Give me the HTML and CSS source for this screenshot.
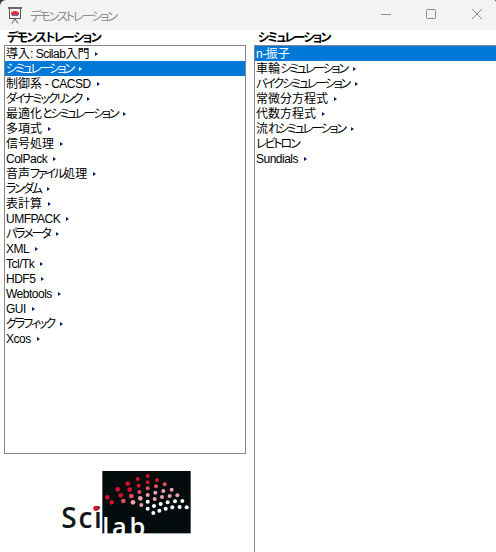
FILE: index.html
```html
<!DOCTYPE html>
<html lang="ja">
<head>
    <meta charset="UTF-8">
    <meta name="viewport" content="width=device-width, initial-scale=1.0">
    <title>デモンストレーション</title>
    <link rel="stylesheet" href="styles.css">
</head>
<body>
    <div class="titlebar">
        <svg class="app-icon" width="14" height="17" viewBox="0 0 14 17">
            <rect x="1.5" y="1.5" width="11" height="10" fill="#f4f1ee" stroke="#5a5a5a"/>
            <rect x="0" y="0" width="14" height="2" fill="#6a6a6a"/>
            <ellipse cx="7" cy="6.5" rx="4" ry="2.6" fill="#d8343f"/>
            <path d="M4 8.5h6" stroke="#4a72b8"/>
            <path d="M4 16.5 L7 12 L10 16.5" fill="none" stroke="#5a5a5a"/>
        </svg>
        <span class="window-title">デモンストレーション</span>
        <div class="window-buttons">
            <svg width="12" height="12" viewBox="0 0 12 12"><path d="M2 6.5H12" stroke="#8c8c8c"/></svg>
            <svg width="12" height="12" viewBox="0 0 12 12"><rect x="1.5" y="1.5" width="9" height="9" rx="1" fill="none" stroke="#8c8c8c"/></svg>
            <svg width="12" height="12" viewBox="0 0 12 12"><path d="M1 1L11 11M11 1L1 11" stroke="#8c8c8c"/></svg>
        </div>
    </div>

    <div class="content">
        <div class="column left-column">
            <h2>デモンストレーション</h2>
            <div class="listbox">
                <div class="row"><b>導入</b>: Scilab<b>入門</b><i class="arrow"></i></div>
                <div class="row selected"><u>シミュレーション</u><i class="arrow"></i></div>
                <div class="row"><b>制御系</b> - CACSD<i class="arrow"></i></div>
                <div class="row"><u>ダイナミックリンク</u><i class="arrow"></i></div>
                <div class="row"><b>最適化</b><u>とシミュレーション</u><i class="arrow"></i></div>
                <div class="row"><b>多項式</b><i class="arrow"></i></div>
                <div class="row"><b>信号処理</b><i class="arrow"></i></div>
                <div class="row">ColPack<i class="arrow"></i></div>
                <div class="row"><b>音声</b><u>ファイル</u><b>処理</b><i class="arrow"></i></div>
                <div class="row"><u>ランダム</u><i class="arrow"></i></div>
                <div class="row"><b>表計算</b><i class="arrow"></i></div>
                <div class="row">UMFPACK<i class="arrow"></i></div>
                <div class="row"><u>パラメータ</u><i class="arrow"></i></div>
                <div class="row">XML<i class="arrow"></i></div>
                <div class="row">Tcl/Tk<i class="arrow"></i></div>
                <div class="row">HDF5<i class="arrow"></i></div>
                <div class="row">Webtools<i class="arrow"></i></div>
                <div class="row">GUI<i class="arrow"></i></div>
                <div class="row"><u>グラフィック</u><i class="arrow"></i></div>
                <div class="row">Xcos<i class="arrow"></i></div>
            </div>
            <div class="logo-area">
                <svg class="logo" width="131" height="80" viewBox="30 75 393 240">
                    <rect x="157" y="78" width="265" height="187" fill="#040c0e"/>
                    <g fill="#d5122a">
                        <circle cx="172" cy="157" r="7"/><circle cx="185" cy="172" r="7"/>
                        <circle cx="203" cy="133" r="7"/><circle cx="212" cy="151" r="7"/>
                        <circle cx="233" cy="116" r="7"/><circle cx="239" cy="134" r="7"/>
                        <circle cx="263" cy="102" r="6"/><circle cx="266" cy="122" r="6"/>
                        <circle cx="293" cy="93" r="6"/><circle cx="293" cy="112" r="6"/>
                        <circle cx="321" cy="105" r="6"/>
                    </g>
                    <g fill="#e6505f">
                        <circle cx="220" cy="168" r="7"/><circle cx="244" cy="153" r="7"/>
                        <circle cx="268" cy="141" r="6"/><circle cx="293" cy="130" r="6"/>
                        <circle cx="318" cy="124" r="6"/><circle cx="344" cy="118" r="6"/>
                    </g>
                    <g fill="#f4a0aa">
                        <circle cx="249" cy="172" r="7"/><circle cx="271" cy="160" r="7"/>
                        <circle cx="274" cy="180" r="6"/><circle cx="293" cy="150" r="6"/>
                        <circle cx="316" cy="143" r="6"/><circle cx="314" cy="162" r="6"/>
                        <circle cx="340" cy="138" r="6"/><circle cx="336" cy="156" r="6"/>
                        <circle cx="365" cy="134" r="6"/><circle cx="359" cy="153" r="6"/>
                        <circle cx="382" cy="151" r="6"/>
                    </g>
                    <g fill="#fff">
                        <circle cx="293" cy="170" r="6"/><circle cx="293" cy="191" r="6"/>
                        <circle cx="312" cy="183" r="6"/><circle cx="310" cy="204" r="6"/>
                        <circle cx="332" cy="177" r="6"/><circle cx="328" cy="197" r="6"/>
                        <circle cx="353" cy="172" r="6"/><circle cx="347" cy="191" r="6"/>
                        <circle cx="375" cy="169" r="6"/><circle cx="367" cy="187" r="6"/>
                        <circle cx="397" cy="168" r="6"/><circle cx="389" cy="186" r="6"/>
                        <circle cx="410" cy="187" r="6"/>
                    </g>
                    <text class="logo-sci" x="34" y="250">Sci</text>
                    <circle cx="138" cy="190" r="8" fill="#d5122a"/>
                    <text class="logo-lab" x="157" y="272">lab</text>
                </svg>
            </div>
        </div>
        <div class="column right-column">
            <h2>シミュレーション</h2>
            <div class="listbox">
                <div class="row selected">n-<b>振子</b></div>
                <div class="row"><b>車輪</b><u>シミュレーション</u><i class="arrow"></i></div>
                <div class="row"><u>バイクシミュレーション</u><i class="arrow"></i></div>
                <div class="row"><b>常微分方程式</b><i class="arrow"></i></div>
                <div class="row"><b>代数方程式</b><i class="arrow"></i></div>
                <div class="row"><b>流</b><u>れシミュレーション</u><i class="arrow"></i></div>
                <div class="row"><u>レビトロン</u></div>
                <div class="row">Sundials<i class="arrow"></i></div>
            </div>
        </div>
    </div>
</body>
</html>
```

FILE: styles.css
```css
body {
    margin: 0;
    width: 496px;
    height: 552px;
    overflow: hidden;
    background: linear-gradient(#2e3a3c, #2e3a3c) top / 100% 10px no-repeat, #fff;
    display: flex;
    flex-direction: column;
    font-family: "Liberation Sans", "Noto Sans CJK JP", sans-serif;
    font-size: 12px;
    font-feature-settings: "palt";
    color: #000;
}

.titlebar {
    height: 30px;
    flex: none;
    background: #f3f3f3;
    border-radius: 6px 2px 0 0;
    display: flex;
    align-items: center;
    padding-left: 8px;
}

.app-icon {
    margin-right: 8px;
}

.window-title {
    color: #8c8c8c;
    letter-spacing: -2px;
}

.window-buttons {
    margin-left: auto;
    display: flex;
    gap: 34px;
    padding: 0 13px 2px 0;
}

.content {
    flex: 1;
    min-height: 0;
    display: flex;
}

.column {
    display: flex;
    flex-direction: column;
    min-height: 0;
}

.left-column {
    width: 242px;
    margin-left: 4px;
}

.right-column {
    flex: 1;
    margin-left: 8px;
}

.column h2 {
    margin: 0;
    height: 15px;
    line-height: 17px;
    font-size: 12px;
    padding-left: 3px;
    letter-spacing: -1.6px;
}

.right-column h2 {
    padding-left: 4px;
    letter-spacing: -1.8px;
}

.listbox {
    flex: 1;
    min-height: 0;
    border: 1px solid #828790;
}

.left-column .listbox {
    flex: none;
    height: 407px;
}

.right-column .listbox {
    border-right: none;
    border-bottom: none;
}

.row {
    height: 15px;
    line-height: 17px;
    padding-left: 1px;
    white-space: nowrap;
    letter-spacing: -0.5px;
}

/* kanji are full width, kana are squeezed like the Windows UI font */
.row b {
    font-weight: normal;
    letter-spacing: 0;
}

.row u {
    text-decoration: none;
    letter-spacing: -2.1px;
}

.row.selected {
    background: #0078d7;
    color: #fff;
}

.arrow {
    display: inline-block;
    margin-left: 6px;
    vertical-align: 2px;
    border-left: 3px solid #00205f;
    border-top: 2.5px solid transparent;
    border-bottom: 2.5px solid transparent;
}

.row.selected .arrow {
    border-left-color: #fff;
}

.logo-area {
    flex: 1;
    padding: 16px 0 0 56px;
}

.logo {
    display: block;
}

.logo-sci {
    font-family: "Open Sans", sans-serif;
    font-weight: 600;
    font-size: 84px;
    letter-spacing: 5px;
    fill: #14181a;
}

.logo-lab {
    font-family: "Open Sans", sans-serif;
    font-weight: 600;
    font-size: 76px;
    letter-spacing: 8px;
    fill: #fff;
}
```
